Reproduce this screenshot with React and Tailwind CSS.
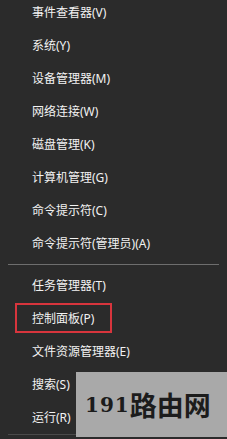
const GROUP_ONE = [
    "事件查看器(V)",
    "系统(Y)",
    "设备管理器(M)",
    "网络连接(W)",
    "磁盘管理(K)",
    "计算机管理(G)",
    "命令提示符(C)",
    "命令提示符(管理员)(A)",
];

const GROUP_TWO = [
    "任务管理器(T)",
    "控制面板(P)",
    "文件资源管理器(E)",
    "搜索(S)",
    "运行(R)",
];

const FONT = "font-['Noto_Sans','Noto_Sans_CJK_SC',sans-serif]";

function Item({ label, marked }) {
    return (
        <li className="relative flex h-[33px] items-center pl-[32px] text-[12px] leading-none text-[#f2f2f2]">
            {label}
            {/* the red highlight drawn over the entry */}
            {marked && (
                <span className="absolute left-[15px] top-[0.5px] h-[30px] w-[97px] border-2 border-[#d8353d]" />
            )}
        </li>
    );
}

export default function App() {
    return (
        <div className={`relative h-[439px] w-[227px] overflow-hidden bg-[#2b2b2b] ${FONT}`}>
            <ul className="mt-[-3.5px]">
                {GROUP_ONE.map((label) => (
                    <Item key={label} label={label} />
                ))}
            </ul>
            <div className="flex h-[9px] items-start pt-[3px]">
                <div className="ml-[8px] h-px w-[211px] bg-[#6e6e6e]" />
            </div>
            <ul>
                {GROUP_TWO.map((label) => (
                    <Item key={label} label={label} marked={label === "控制面板(P)"} />
                ))}
            </ul>
            <div className="mt-[-1px] ml-[8px] h-px w-[211px] bg-[#4a4a4a]" />

            {/* watermark pasted over the corner */}
            <div className="absolute left-[76px] top-[372px] right-0 bottom-[2px] flex items-center bg-[#a9a9a9] pl-[9px] text-[#1c1c1c]">
                <span className="font-['DejaVu_Serif',serif] text-[20px] font-bold leading-none tracking-[1px]">191</span>
                <span className="font-['Noto_Sans_CJK_SC',sans-serif] text-[27px] font-bold leading-none">路由网</span>
            </div>
        </div>
    );
}
